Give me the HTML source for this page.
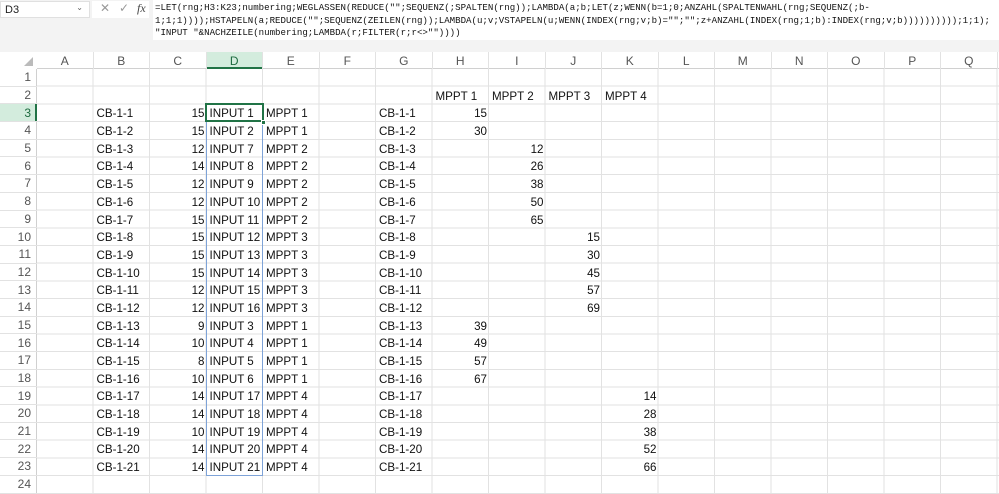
<!DOCTYPE html>
<html><head><meta charset="utf-8"><style>
*{margin:0;padding:0;box-sizing:border-box}
body{width:999px;height:494px;overflow:hidden;background:#fff;font-family:"Liberation Sans",Arial,sans-serif;position:relative}
#top{position:absolute;left:0;top:0;width:999px;height:52px;background:#f3f3f3}
#nb{position:absolute;left:0;top:1px;width:90px;height:17px;background:#fff;border:1px solid #e0e0e0;font-size:11px;padding:2px 4px;color:#222}
#nb span{position:absolute;right:6px;top:1px;font-size:8px;color:#666}
#ic{position:absolute;left:92px;top:1px;width:57px;height:17px;background:#fff;font-size:12px;color:#999}
#fx{position:absolute;left:153px;top:0;width:846px;height:40px;background:#fff;font-family:"Liberation Mono",monospace;font-size:9.1px;line-height:12.5px;padding:2px 2px;color:#111;white-space:pre}
#g{position:absolute;left:0;top:52px;display:grid;grid-template-columns:37px repeat(17,56.5px);grid-template-rows:17px repeat(24,17.7px);font-size:11.6px;color:#111}
#lines{position:absolute;left:37px;top:69px;width:962px;height:425px;
background:repeating-linear-gradient(to right,transparent 0 55.5px,#e2e2e2 55.5px 56.5px),repeating-linear-gradient(to bottom,transparent 0 16.7px,#e2e2e2 16.7px 17.7px)}
#hr{position:absolute;left:0;top:52px;width:999px;height:17px;border-bottom:1px solid #d0d0d0;background:#fff}
#hc{position:absolute;left:0;top:69px;width:37px;height:425px;border-right:1px solid #d0d0d0;background:#fff}
.h{color:#555;font-size:12px;display:flex;align-items:center;justify-content:center;border-right:1px solid #e2e2e2}
.r{color:#555;font-size:12px;display:flex;align-items:center;justify-content:flex-end;padding-right:6px;grid-column:1;border-bottom:1px solid #e2e2e2}
.c{padding:2px 2px 0 3px;white-space:nowrap;line-height:15px}
.n{text-align:right;padding-right:2px}
</style></head><body>
<div id="top">
<div id="nb">D3<span>⌄</span></div>
<div id="ic"><span style="position:absolute;left:8px;top:0">✕</span><span style="position:absolute;left:27px;top:0">✓</span><span style="position:absolute;left:45px;top:0;font-style:italic;font-family:'Liberation Serif',serif;color:#444">fx</span></div>
<div id="fx">=LET(rng;H3:K23;numbering;WEGLASSEN(REDUCE("";SEQUENZ(;SPALTEN(rng));LAMBDA(a;b;LET(z;WENN(b=1;0;ANZAHL(SPALTENWAHL(rng;SEQUENZ(;b-
1;1;1))));HSTAPELN(a;REDUCE("";SEQUENZ(ZEILEN(rng));LAMBDA(u;v;VSTAPELN(u;WENN(INDEX(rng;v;b)="";"";z+ANZAHL(INDEX(rng;1;b):INDEX(rng;v;b))))))))));1;1);
"INPUT "&amp;NACHZEILE(numbering;LAMBDA(r;FILTER(r;r&lt;&gt;""))))</div>
</div>
<div id="hr"></div><div id="hc"></div><div id="lines"></div>
<div style="position:absolute;left:0;top:52px;width:37px;height:17px;background:#fff"><div style="position:absolute;right:4px;bottom:3px;width:0;height:0;border-left:9px solid transparent;border-bottom:9px solid #bbb"></div></div>
<div style="position:absolute;left:206px;top:52px;width:57px;height:17px;background:#d3ecdd;border-bottom:2px solid #217346"></div>
<div style="position:absolute;left:0;top:104px;width:37px;height:18px;background:#d3ecdd;border-right:2px solid #217346"></div>
<div style="position:absolute;left:206px;top:121px;width:57px;height:355px;border:1px solid #7ea3d8"></div>
<div style="position:absolute;left:205px;top:103px;width:59px;height:19px;border:2px solid #217346"></div>
<div style="position:absolute;left:261px;top:120px;width:5px;height:5px;background:#217346;border:1px solid #fff"></div>
<div id="g">
<div class="h" style="grid-area:1/2">A</div><div class="h" style="grid-area:1/3">B</div><div class="h" style="grid-area:1/4">C</div><div class="h" style="grid-area:1/5;color:#1e6b40">D</div><div class="h" style="grid-area:1/6">E</div><div class="h" style="grid-area:1/7">F</div><div class="h" style="grid-area:1/8">G</div><div class="h" style="grid-area:1/9">H</div><div class="h" style="grid-area:1/10">I</div><div class="h" style="grid-area:1/11">J</div><div class="h" style="grid-area:1/12">K</div><div class="h" style="grid-area:1/13">L</div><div class="h" style="grid-area:1/14">M</div><div class="h" style="grid-area:1/15">N</div><div class="h" style="grid-area:1/16">O</div><div class="h" style="grid-area:1/17">P</div><div class="h" style="grid-area:1/18">Q</div>
<div class="r" style="grid-row:2">1</div><div class="r" style="grid-row:3">2</div><div class="r" style="grid-row:4;color:#1e6b40">3</div><div class="r" style="grid-row:5">4</div><div class="r" style="grid-row:6">5</div><div class="r" style="grid-row:7">6</div><div class="r" style="grid-row:8">7</div><div class="r" style="grid-row:9">8</div><div class="r" style="grid-row:10">9</div><div class="r" style="grid-row:11">10</div><div class="r" style="grid-row:12">11</div><div class="r" style="grid-row:13">12</div><div class="r" style="grid-row:14">13</div><div class="r" style="grid-row:15">14</div><div class="r" style="grid-row:16">15</div><div class="r" style="grid-row:17">16</div><div class="r" style="grid-row:18">17</div><div class="r" style="grid-row:19">18</div><div class="r" style="grid-row:20">19</div><div class="r" style="grid-row:21">20</div><div class="r" style="grid-row:22">21</div><div class="r" style="grid-row:23">22</div><div class="r" style="grid-row:24">23</div><div class="r" style="grid-row:25">24</div>
<div class="c" style="grid-area:3/9">MPPT 1</div><div class="c" style="grid-area:3/10">MPPT 2</div><div class="c" style="grid-area:3/11">MPPT 3</div><div class="c" style="grid-area:3/12">MPPT 4</div>

<div class="c" style="grid-area:4/3">CB-1-1</div><div class="c n" style="grid-area:4/4">15</div><div class="c" style="grid-area:4/5">INPUT 1</div><div class="c" style="grid-area:4/6">MPPT 1</div><div class="c" style="grid-area:4/8">CB-1-1</div><div class="c n" style="grid-area:4/9">15</div>
<div class="c" style="grid-area:5/3">CB-1-2</div><div class="c n" style="grid-area:5/4">15</div><div class="c" style="grid-area:5/5">INPUT 2</div><div class="c" style="grid-area:5/6">MPPT 1</div><div class="c" style="grid-area:5/8">CB-1-2</div><div class="c n" style="grid-area:5/9">30</div>
<div class="c" style="grid-area:6/3">CB-1-3</div><div class="c n" style="grid-area:6/4">12</div><div class="c" style="grid-area:6/5">INPUT 7</div><div class="c" style="grid-area:6/6">MPPT 2</div><div class="c" style="grid-area:6/8">CB-1-3</div><div class="c n" style="grid-area:6/10">12</div>
<div class="c" style="grid-area:7/3">CB-1-4</div><div class="c n" style="grid-area:7/4">14</div><div class="c" style="grid-area:7/5">INPUT 8</div><div class="c" style="grid-area:7/6">MPPT 2</div><div class="c" style="grid-area:7/8">CB-1-4</div><div class="c n" style="grid-area:7/10">26</div>
<div class="c" style="grid-area:8/3">CB-1-5</div><div class="c n" style="grid-area:8/4">12</div><div class="c" style="grid-area:8/5">INPUT 9</div><div class="c" style="grid-area:8/6">MPPT 2</div><div class="c" style="grid-area:8/8">CB-1-5</div><div class="c n" style="grid-area:8/10">38</div>
<div class="c" style="grid-area:9/3">CB-1-6</div><div class="c n" style="grid-area:9/4">12</div><div class="c" style="grid-area:9/5">INPUT 10</div><div class="c" style="grid-area:9/6">MPPT 2</div><div class="c" style="grid-area:9/8">CB-1-6</div><div class="c n" style="grid-area:9/10">50</div>
<div class="c" style="grid-area:10/3">CB-1-7</div><div class="c n" style="grid-area:10/4">15</div><div class="c" style="grid-area:10/5">INPUT 11</div><div class="c" style="grid-area:10/6">MPPT 2</div><div class="c" style="grid-area:10/8">CB-1-7</div><div class="c n" style="grid-area:10/10">65</div>
<div class="c" style="grid-area:11/3">CB-1-8</div><div class="c n" style="grid-area:11/4">15</div><div class="c" style="grid-area:11/5">INPUT 12</div><div class="c" style="grid-area:11/6">MPPT 3</div><div class="c" style="grid-area:11/8">CB-1-8</div><div class="c n" style="grid-area:11/11">15</div>
<div class="c" style="grid-area:12/3">CB-1-9</div><div class="c n" style="grid-area:12/4">15</div><div class="c" style="grid-area:12/5">INPUT 13</div><div class="c" style="grid-area:12/6">MPPT 3</div><div class="c" style="grid-area:12/8">CB-1-9</div><div class="c n" style="grid-area:12/11">30</div>
<div class="c" style="grid-area:13/3">CB-1-10</div><div class="c n" style="grid-area:13/4">15</div><div class="c" style="grid-area:13/5">INPUT 14</div><div class="c" style="grid-area:13/6">MPPT 3</div><div class="c" style="grid-area:13/8">CB-1-10</div><div class="c n" style="grid-area:13/11">45</div>
<div class="c" style="grid-area:14/3">CB-1-11</div><div class="c n" style="grid-area:14/4">12</div><div class="c" style="grid-area:14/5">INPUT 15</div><div class="c" style="grid-area:14/6">MPPT 3</div><div class="c" style="grid-area:14/8">CB-1-11</div><div class="c n" style="grid-area:14/11">57</div>
<div class="c" style="grid-area:15/3">CB-1-12</div><div class="c n" style="grid-area:15/4">12</div><div class="c" style="grid-area:15/5">INPUT 16</div><div class="c" style="grid-area:15/6">MPPT 3</div><div class="c" style="grid-area:15/8">CB-1-12</div><div class="c n" style="grid-area:15/11">69</div>
<div class="c" style="grid-area:16/3">CB-1-13</div><div class="c n" style="grid-area:16/4">9</div><div class="c" style="grid-area:16/5">INPUT 3</div><div class="c" style="grid-area:16/6">MPPT 1</div><div class="c" style="grid-area:16/8">CB-1-13</div><div class="c n" style="grid-area:16/9">39</div>
<div class="c" style="grid-area:17/3">CB-1-14</div><div class="c n" style="grid-area:17/4">10</div><div class="c" style="grid-area:17/5">INPUT 4</div><div class="c" style="grid-area:17/6">MPPT 1</div><div class="c" style="grid-area:17/8">CB-1-14</div><div class="c n" style="grid-area:17/9">49</div>
<div class="c" style="grid-area:18/3">CB-1-15</div><div class="c n" style="grid-area:18/4">8</div><div class="c" style="grid-area:18/5">INPUT 5</div><div class="c" style="grid-area:18/6">MPPT 1</div><div class="c" style="grid-area:18/8">CB-1-15</div><div class="c n" style="grid-area:18/9">57</div>
<div class="c" style="grid-area:19/3">CB-1-16</div><div class="c n" style="grid-area:19/4">10</div><div class="c" style="grid-area:19/5">INPUT 6</div><div class="c" style="grid-area:19/6">MPPT 1</div><div class="c" style="grid-area:19/8">CB-1-16</div><div class="c n" style="grid-area:19/9">67</div>
<div class="c" style="grid-area:20/3">CB-1-17</div><div class="c n" style="grid-area:20/4">14</div><div class="c" style="grid-area:20/5">INPUT 17</div><div class="c" style="grid-area:20/6">MPPT 4</div><div class="c" style="grid-area:20/8">CB-1-17</div><div class="c n" style="grid-area:20/12">14</div>
<div class="c" style="grid-area:21/3">CB-1-18</div><div class="c n" style="grid-area:21/4">14</div><div class="c" style="grid-area:21/5">INPUT 18</div><div class="c" style="grid-area:21/6">MPPT 4</div><div class="c" style="grid-area:21/8">CB-1-18</div><div class="c n" style="grid-area:21/12">28</div>
<div class="c" style="grid-area:22/3">CB-1-19</div><div class="c n" style="grid-area:22/4">10</div><div class="c" style="grid-area:22/5">INPUT 19</div><div class="c" style="grid-area:22/6">MPPT 4</div><div class="c" style="grid-area:22/8">CB-1-19</div><div class="c n" style="grid-area:22/12">38</div>
<div class="c" style="grid-area:23/3">CB-1-20</div><div class="c n" style="grid-area:23/4">14</div><div class="c" style="grid-area:23/5">INPUT 20</div><div class="c" style="grid-area:23/6">MPPT 4</div><div class="c" style="grid-area:23/8">CB-1-20</div><div class="c n" style="grid-area:23/12">52</div>
<div class="c" style="grid-area:24/3">CB-1-21</div><div class="c n" style="grid-area:24/4">14</div><div class="c" style="grid-area:24/5">INPUT 21</div><div class="c" style="grid-area:24/6">MPPT 4</div><div class="c" style="grid-area:24/8">CB-1-21</div><div class="c n" style="grid-area:24/12">66</div>
</div>
</body></html>
